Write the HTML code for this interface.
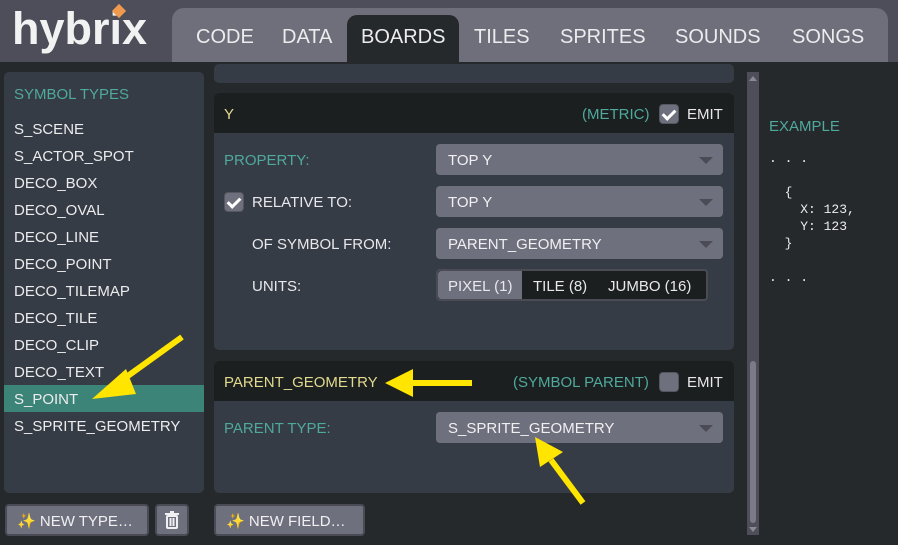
<!DOCTYPE html>
<html><head><meta charset="utf-8"><style>
*{box-sizing:border-box;margin:0;padding:0}
body{width:898px;height:545px;background:#26292b;font-family:"Liberation Sans",sans-serif;color:#e8e8ec;position:relative;overflow:hidden;font-size:15px}
.abs{position:absolute}
.top{left:0;top:0;width:898px;height:62px;background:#4e4e5a}
.logo{left:12px;top:3px;font-size:45px;font-weight:bold;color:#f2f2f2;letter-spacing:0px}
.dia{left:114px;top:6px;width:10px;height:10px;background:#f09a50;transform:rotate(45deg)}
.tabs{left:172px;top:8px;width:716px;height:54px;background:#6f6f7c;border-radius:12px 12px 0 0}
.tab{top:26px;font-size:20px;color:#ececee}
.act{left:347px;top:15px;width:112px;height:47px;background:#26292b;border-radius:10px 10px 0 0}
.panel{background:#363c45;border-radius:5px}
.hdr{background:#1c1f20;border-radius:5px 5px 0 0}
.teal{color:#4fa99d}
.yel{color:#e2da8e}
.li{left:14px;font-size:15px;color:#ececee}
.dd{background:#6f707d;border-radius:4px;height:31px;font-size:15px;padding:8px 12px;color:#f0f0f2}
.dd:after{content:"";position:absolute;right:10px;top:13px;border-left:7px solid transparent;border-right:7px solid transparent;border-top:7px solid #4a4b55}
.cb{width:20px;height:20px;background:#6f707d;border-radius:4px;border:1px solid #55565f}
.cb.on:after{content:"";position:absolute;left:5px;top:2px;width:5px;height:10px;border:solid #fff;border-width:0 3px 3px 0;transform:rotate(45deg)}
.btn{background:#6f707d;border-radius:4px;border:2px solid #4a4b55;height:32px;font-size:15px;padding:6px 10px;color:#f0f0f2}
.mono{font-family:"Liberation Mono",monospace;font-size:13px;color:#ececee;line-height:17px;white-space:pre}
</style></head><body>
<div class="abs top"></div>
<div class="abs logo">hybrix</div>
<div class="abs dia"></div>
<div class="abs tabs"></div>
<div class="abs act"></div>
<div class="abs tab" style="left:196px">CODE</div>
<div class="abs tab" style="left:282px">DATA</div>
<div class="abs tab" style="left:361px">BOARDS</div>
<div class="abs tab" style="left:474px">TILES</div>
<div class="abs tab" style="left:560px">SPRITES</div>
<div class="abs tab" style="left:675px">SOUNDS</div>
<div class="abs tab" style="left:792px">SONGS</div>

<div class="abs panel" style="left:4px;top:72px;width:200px;height:421px"></div>
<div class="abs teal" style="left:14px;top:86px;font-size:15px">SYMBOL TYPES</div>
<div class="abs" style="left:4px;top:385px;width:200px;height:27px;background:#3d8478"></div>
<div class="abs li" style="top:121px">S_SCENE</div>
<div class="abs li" style="top:148px">S_ACTOR_SPOT</div>
<div class="abs li" style="top:175px">DECO_BOX</div>
<div class="abs li" style="top:202px">DECO_OVAL</div>
<div class="abs li" style="top:229px">DECO_LINE</div>
<div class="abs li" style="top:256px">DECO_POINT</div>
<div class="abs li" style="top:283px">DECO_TILEMAP</div>
<div class="abs li" style="top:310px">DECO_TILE</div>
<div class="abs li" style="top:337px">DECO_CLIP</div>
<div class="abs li" style="top:364px">DECO_TEXT</div>
<div class="abs li" style="top:391px">S_POINT</div>
<div class="abs li" style="top:418px">S_SPRITE_GEOMETRY</div>

<div class="abs panel" style="left:214px;top:64px;width:520px;height:19px"></div>
<div class="abs panel" style="left:214px;top:93px;width:520px;height:257px"></div>
<div class="abs hdr" style="left:214px;top:93px;width:520px;height:40px"></div>
<div class="abs yel" style="left:224px;top:106px">Y</div>
<div class="abs teal" style="left:582px;top:106px">(METRIC)</div>
<div class="abs cb on" style="left:659px;top:104px"></div>
<div class="abs" style="left:687px;top:106px">EMIT</div>
<div class="abs teal" style="left:224px;top:152px">PROPERTY:</div>
<div class="abs dd" style="left:436px;top:144px;width:287px">TOP Y</div>
<div class="abs cb on" style="left:224px;top:192px"></div>
<div class="abs" style="left:252px;top:194px">RELATIVE TO:</div>
<div class="abs dd" style="left:436px;top:186px;width:287px">TOP Y</div>
<div class="abs" style="left:252px;top:236px">OF SYMBOL FROM:</div>
<div class="abs dd" style="left:436px;top:228px;width:287px">PARENT_GEOMETRY</div>
<div class="abs" style="left:252px;top:278px">UNITS:</div>
<div class="abs" style="left:436px;top:269px;width:272px;height:32px;background:#1c1f20;border:2px solid #4a4b55;border-radius:4px"></div>
<div class="abs" style="left:438px;top:271px;width:84px;height:28px;background:#6f707d;border-radius:3px 0 0 3px"></div>
<div class="abs" style="left:448px;top:278px">PIXEL (1)</div>
<div class="abs" style="left:533px;top:278px">TILE (8)</div>
<div class="abs" style="left:608px;top:278px">JUMBO (16)</div>

<div class="abs panel" style="left:214px;top:361px;width:520px;height:132px"></div>
<div class="abs hdr" style="left:214px;top:361px;width:520px;height:40px"></div>
<div class="abs yel" style="left:224px;top:374px">PARENT_GEOMETRY</div>
<div class="abs teal" style="left:513px;top:374px">(SYMBOL PARENT)</div>
<div class="abs cb" style="left:659px;top:372px"></div>
<div class="abs" style="left:687px;top:374px">EMIT</div>
<div class="abs teal" style="left:224px;top:420px">PARENT TYPE:</div>
<div class="abs dd" style="left:436px;top:412px;width:287px">S_SPRITE_GEOMETRY</div>

<div class="abs" style="left:747px;top:72px;width:12px;height:463px;background:#4e4e5a"></div>
<div class="abs" style="left:750px;top:361px;width:6px;height:162px;background:#7a7a88;border-radius:3px"></div>
<div class="abs" style="left:749px;top:76px;border-left:4px solid transparent;border-right:4px solid transparent;border-bottom:5px solid #8a8a96"></div>
<div class="abs" style="left:749px;top:527px;border-left:4px solid transparent;border-right:4px solid transparent;border-top:5px solid #8a8a96"></div>

<div class="abs teal" style="left:769px;top:118px">EXAMPLE</div>
<div class="abs mono" style="left:769px;top:150px">. . .

  {
    X: 123,
    Y: 123
  }

. . .</div>

<div class="abs btn" style="left:5px;top:504px;width:144px"><span style="color:#f0dc90">✨</span> NEW TYPE…</div>
<div class="abs btn" style="left:155px;top:504px;width:34px"></div>
<svg class="abs" style="left:163px;top:510px" width="18" height="20"><g fill="none" stroke="#f0f0f2" stroke-width="2"><line x1="2" y1="4" x2="16" y2="4"/><line x1="7" y1="2" x2="11" y2="2"/><rect x="4" y="6" width="10" height="12" rx="1"/><line x1="7.5" y1="8" x2="7.5" y2="16"/><line x1="10.5" y1="8" x2="10.5" y2="16"/></g></svg>
<div class="abs btn" style="left:214px;top:504px;width:151px"><span style="color:#f0dc90">✨</span> NEW FIELD…</div>

<svg class="abs" style="left:0;top:0" width="898" height="545">
<g fill="#ffe500" stroke="#ffe500">
<line x1="182" y1="337" x2="118" y2="383" stroke-width="6"/>
<polygon points="92,399 126,369 136,394" stroke="none"/>
<line x1="472" y1="383" x2="413" y2="383" stroke-width="6"/>
<polygon points="385,383 413,369 413,397" stroke="none"/>
<line x1="583" y1="503" x2="551" y2="460" stroke-width="6"/>
<polygon points="535,437 563,452 540,467" stroke="none"/>
</g></svg>
</body></html>
